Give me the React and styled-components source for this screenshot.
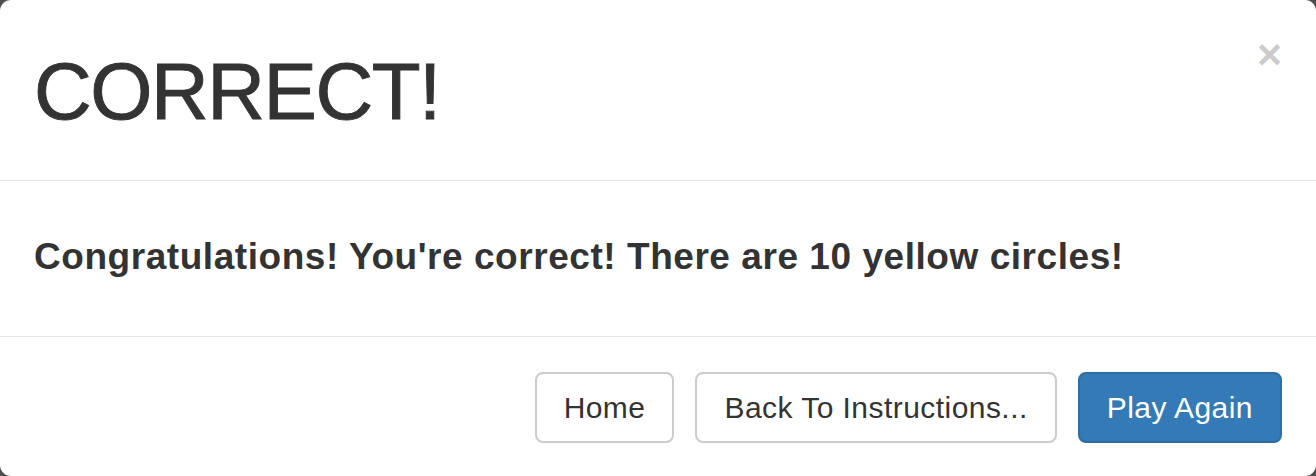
import React from 'react';
import styled, { createGlobalStyle } from 'styled-components';

const GlobalStyle = createGlobalStyle`
  html, body {
    margin: 0;
    padding: 0;
    background: #4f4f4f;
  }
  body {
    font-family: "Liberation Sans", Arial, Helvetica, sans-serif;
    color: #333;
  }
`;

const Modal = styled.div`
  width: 1316px;
  height: 476px;
  box-sizing: border-box;
  background: #fff;
  border-radius: 11px;
  display: flex;
  flex-direction: column;
  overflow: hidden;
`;

const Header = styled.div`
  display: flex;
  justify-content: space-between;
  align-items: flex-start;
  height: 181px;
  box-sizing: border-box;
  padding: 36px 34px 30px 34px;
  border-bottom: 1px solid #e5e5e5;
`;

const Title = styled.h1`
  margin: 0;
  font-size: 80px;
  line-height: 112px;
  font-weight: 400;
  letter-spacing: -1.5px;
  -webkit-text-stroke: 0.9px #333;
  color: #333;
`;

const CloseButton = styled.button`
  background: none;
  border: none;
  padding: 0;
  margin-top: -3px;
  font-family: inherit;
  font-size: 43px;
  font-weight: 700;
  line-height: 1;
  color: #000;
  opacity: 0.2;
  cursor: pointer;
`;

const Body = styled.div`
  height: 156px;
  box-sizing: border-box;
  padding: 0 34px 4px 34px;
  display: flex;
  align-items: center;
  border-bottom: 1px solid #e5e5e5;
`;

const Message = styled.p`
  margin: 0;
  font-size: 37px;
  font-weight: 700;
  line-height: 1.4;
  letter-spacing: 0.55px;
  color: #333;
`;

const Footer = styled.div`
  flex: 1;
  display: flex;
  justify-content: flex-end;
  align-items: flex-start;
  gap: 21px;
  padding: 35px 34px 0 34px;
`;

const Button = styled.button`
  height: 71px;
  box-sizing: border-box;
  padding: 0 27px;
  font-family: inherit;
  font-size: 30px;
  letter-spacing: 0.45px;
  border-radius: 8px;
  border: 2px solid ${props => (props.$primary ? '#2e6da4' : '#ccc')};
  background: ${props => (props.$primary ? '#337ab7' : '#fff')};
  color: ${props => (props.$primary ? '#fff' : '#333')};
  cursor: pointer;
`;

const App = () => (
  <>
    <GlobalStyle />
    <Modal>
      <Header>
        <Title>CORRECT!</Title>
        <CloseButton aria-label="Close">&times;</CloseButton>
      </Header>
      <Body>
        <Message>Congratulations! You're correct! There are 10 yellow circles!</Message>
      </Body>
      <Footer>
        <Button>Home</Button>
        <Button>Back To Instructions...</Button>
        <Button $primary>Play Again</Button>
      </Footer>
    </Modal>
  </>
);

export default App;
